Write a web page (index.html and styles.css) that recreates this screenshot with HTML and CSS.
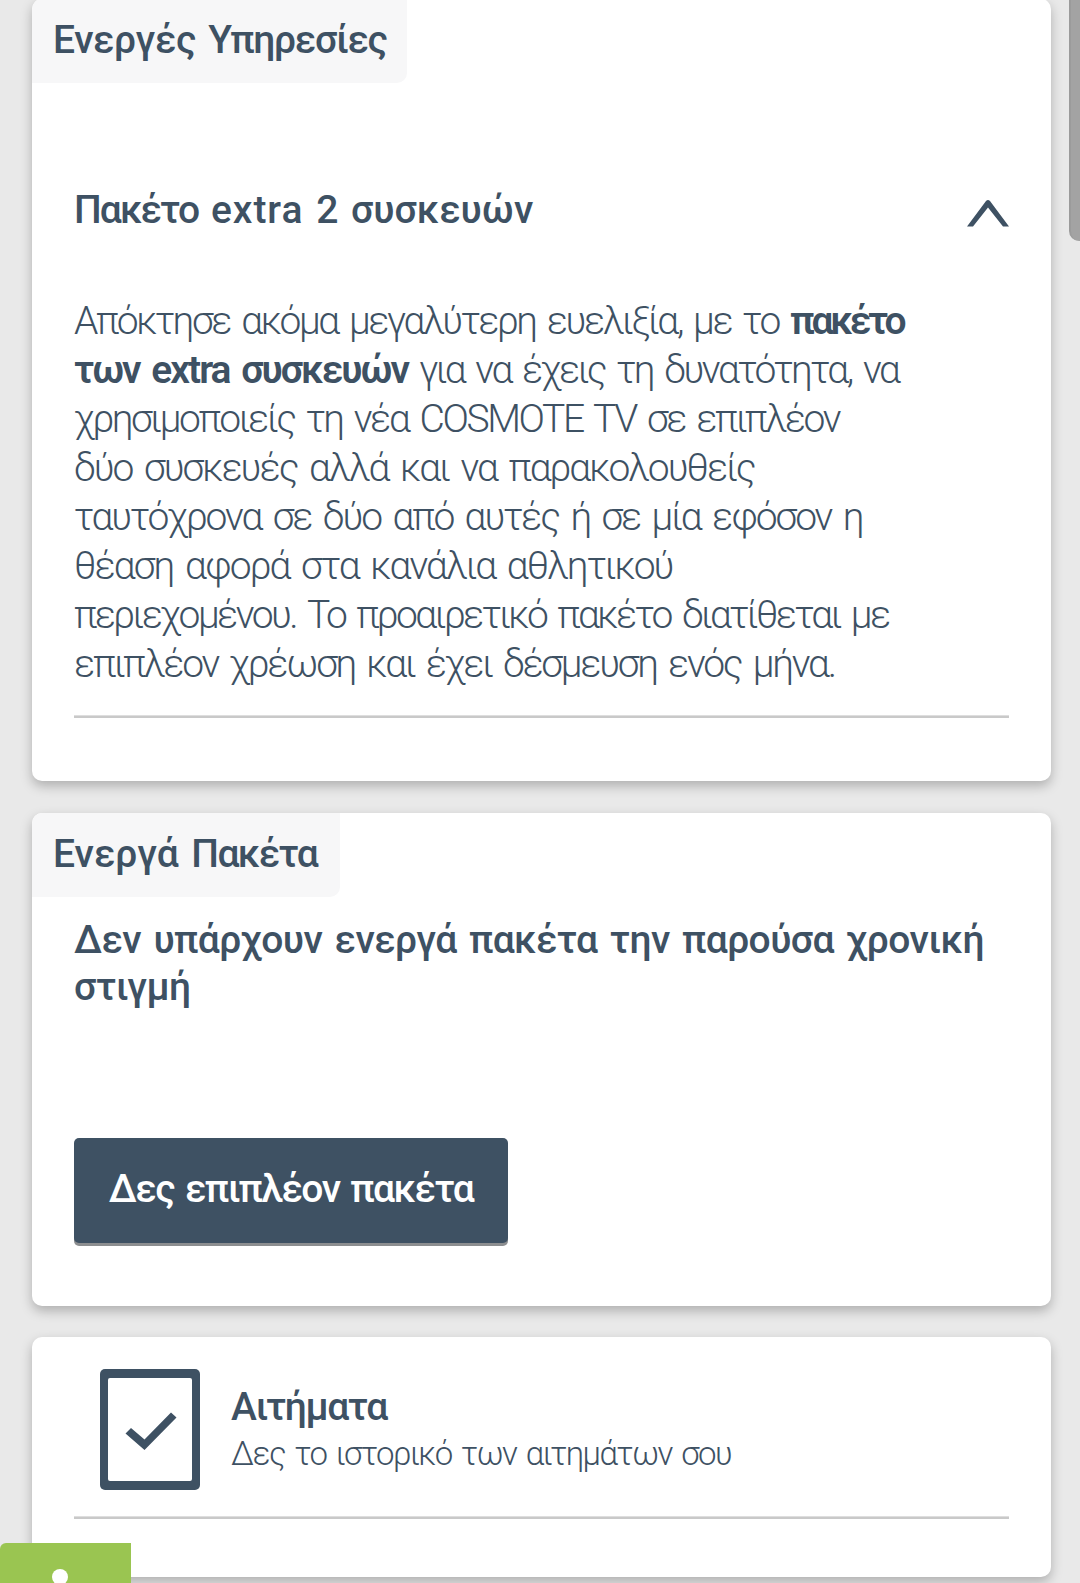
FILE: index.html
```html
<!DOCTYPE html>
<html lang="el">
<head>
  <meta charset="UTF-8">
  <meta name="viewport" content="width=device-width, initial-scale=1.0">
  <title>Οι Υπηρεσίες μου</title>
  <link rel="stylesheet" href="styles.css">
</head>
<body>
  <main class="page">
    <!-- Active services -->
    <section class="card services">
      <h2 class="tab tab-services">Ενεργές <span class="tight">Υπηρεσίες</span></h2>
      <div class="accordion">
        <div class="accordion-head">
          <h3 class="accordion-title"><span class="tight">Πακέτο</span> <span class="wide">extra</span> 2 συσκευών</h3>
          <svg class="chevron" viewBox="0 0 42 27" width="42" height="27">
            <path d="M0 26.5 L19 1 Q21 -1 23 1 L42 26.5 H36 L21 7.5 L6 26.5 Z" fill="#3e5163"/>
          </svg>
        </div>
        <p class="description">
          <span class="line l1">Απόκτησε ακόμα μεγαλύτερη ευελιξία, με το <b>πακέτο</b></span>
          <span class="line l2"><b>των extra συσκευών</b> για να έχεις τη δυνατότητα, να</span>
          <span class="line l3">χρησιμοποιείς τη νέα COSMOTE TV σε επιπλέον</span>
          <span class="line l4">δύο συσκευές αλλά και να παρακολουθείς</span>
          <span class="line l5">ταυτόχρονα σε δύο από αυτές ή σε μία εφόσον η</span>
          <span class="line l6">θέαση αφορά στα κανάλια αθλητικού</span>
          <span class="line l7">περιεχομένου. Το προαιρετικό πακέτο διατίθεται με</span>
          <span class="line l8">επιπλέον χρέωση και έχει δέσμευση ενός μήνα.</span>
        </p>
        <div class="divider"></div>
      </div>
    </section>

    <!-- Active packages -->
    <section class="card packages">
      <h2 class="tab tab-packages">Ενεργά <span class="tight">Πακέτα</span></h2>
      <h3 class="empty">Δεν υπάρχουν ενεργά πακέτα την παρούσα χρονική στιγμή</h3>
      <button class="btn" type="button">Δες επιπλέον πακέτα</button>
    </section>

    <!-- Requests -->
    <section class="card requests">
      <a class="request">
        <svg class="request-icon" viewBox="0 0 100 121" width="100" height="121">
          <rect width="100" height="121" rx="5" fill="#3e5163"/>
          <rect x="8" y="9" width="84" height="103" rx="2" fill="#fff"/>
          <path d="M25.5 64.5 L31 59 L44.5 70.5 L71 43.5 L76.5 48.5 L44.5 81 Z" fill="#3e5163"/>
        </svg>
        <div class="request-text">
          <h3 class="request-title">Αιτήματα</h3>
          <p class="request-sub">Δες το ιστορικό των αιτημάτων σου</p>
        </div>
      </a>
      <div class="divider"></div>
    </section>
  </main>

  <div class="scrollbar"></div>
  <div class="info"><span class="info-dot"></span></div>
</body>
</html>
```
FILE: styles.css
```css
* {
  box-sizing: border-box;
}

body {
  margin: 0;
  height: 1583px;
  overflow: hidden;
  position: relative;
  background-color: #e9e9e9;
  color: #3e5163;
  font-family: Roboto, "Noto Sans", sans-serif;
  font-size: 39px;
}

h2, h3, p {
  margin: 0;
  font-size: 39px;
  font-weight: 500;
  white-space: nowrap;
}

.tight {
  letter-spacing: -1.6px;
}

.wide {
  letter-spacing: 1px;
}

.page {
  display: flex;
  flex-direction: column;
  width: 1019px;
  margin: -1px 0 0 32px;
}

.card {
  background-color: #fff;
  border-radius: 10px;
  box-shadow: 0 5px 12px rgba(0, 0, 0, 0.25);
}

.services {
  height: 782px;
  margin-bottom: 32px;
}

.packages {
  height: 493px;
  margin-bottom: 31px;
}

.requests {
  height: 240px;
  padding: 32px 42px 0;
}

.tab {
  height: 84px;
  padding-left: 21px;
  line-height: 83px;
  background-color: #f7f7f8;
  border-radius: 10px 0 10px 0;
}

.tab-services {
  width: 375px;
  letter-spacing: -0.4px;
  word-spacing: 3px;
}

.tab-services .tight {
  letter-spacing: -1.3px;
}

.tab-packages {
  width: 308px;
  word-spacing: 3px;
}

/* Accordion */
.accordion {
  padding: 104px 42px 0;
}

.accordion-head {
  display: flex;
  justify-content: space-between;
  align-items: center;
  height: 47px;
  line-height: 47px;
}

.accordion-title {
  word-spacing: 3px;
}

.accordion-title .tight {
  letter-spacing: -1.9px;
}

.chevron {
  margin-top: 5px;
}

.description {
  margin: 63px 0 26px;
  font-weight: 300;
  line-height: 49px;
  word-spacing: 4px;
}

.line {
  display: block;
}

.description b {
  font-weight: 600;
}

.l1 { letter-spacing: -2.4px; }
.l1 b { letter-spacing: -3.3px; }
.l2 { letter-spacing: -2.45px; }
.l2 b { letter-spacing: -2px; }
.l3 { letter-spacing: -2.4px; }
.l4 { letter-spacing: -2px; }
.l5 { letter-spacing: -2.1px; }
.l6 { letter-spacing: -1.93px; }
.l7 { letter-spacing: -2.55px; }
.l8 { letter-spacing: -2.25px; }

.divider {
  height: 3px;
  background-color: #c9c9c9;
  border-top: 1px solid #dedede;
}

/* Packages */
.empty {
  margin: 20px 42px 127px;
  line-height: 47px;
  letter-spacing: -0.6px;
  word-spacing: 3.3px;
  white-space: normal;
}

.btn {
  display: block;
  width: 434px;
  height: 105px;
  margin-left: 42px;
  padding: 0 0 3px;
  border: none;
  border-radius: 5px;
  background-color: #3e5163;
  box-shadow: 0 3px 0 #8c8e90;
  color: #fff;
  font-family: inherit;
  font-size: 39px;
  font-weight: 500;
  line-height: 102px;
  letter-spacing: -1.5px;
  word-spacing: 2.6px;
  white-space: nowrap;
}

/* Requests */
.request {
  display: flex;
  height: 121px;
  margin: 0 0 26px 26px;
}

.request-text {
  margin: 15px 0 0 31px;
}

.request-title {
  line-height: 47px;
  letter-spacing: -1.4px;
}

.request-sub {
  margin-top: 3px;
  font-size: 33px;
  font-weight: 300;
  line-height: 40px;
  letter-spacing: -1.5px;
  word-spacing: 2.8px;
}

/* Overlays */
.scrollbar {
  position: absolute;
  top: -10px;
  right: 0;
  width: 11px;
  height: 251px;
  background-color: #a3a3a3;
  border-left: 2px solid #9b9b9b;
  border-radius: 0 0 0 10px;
}

.info {
  position: absolute;
  left: 0;
  bottom: 0;
  width: 131px;
  height: 40px;
  background-color: #9ac551;
  border-top-left-radius: 6px;
}

.info-dot {
  position: absolute;
  top: 26px;
  left: 52px;
  width: 16px;
  height: 16px;
  background-color: #fff;
  border-radius: 50%;
}
```
